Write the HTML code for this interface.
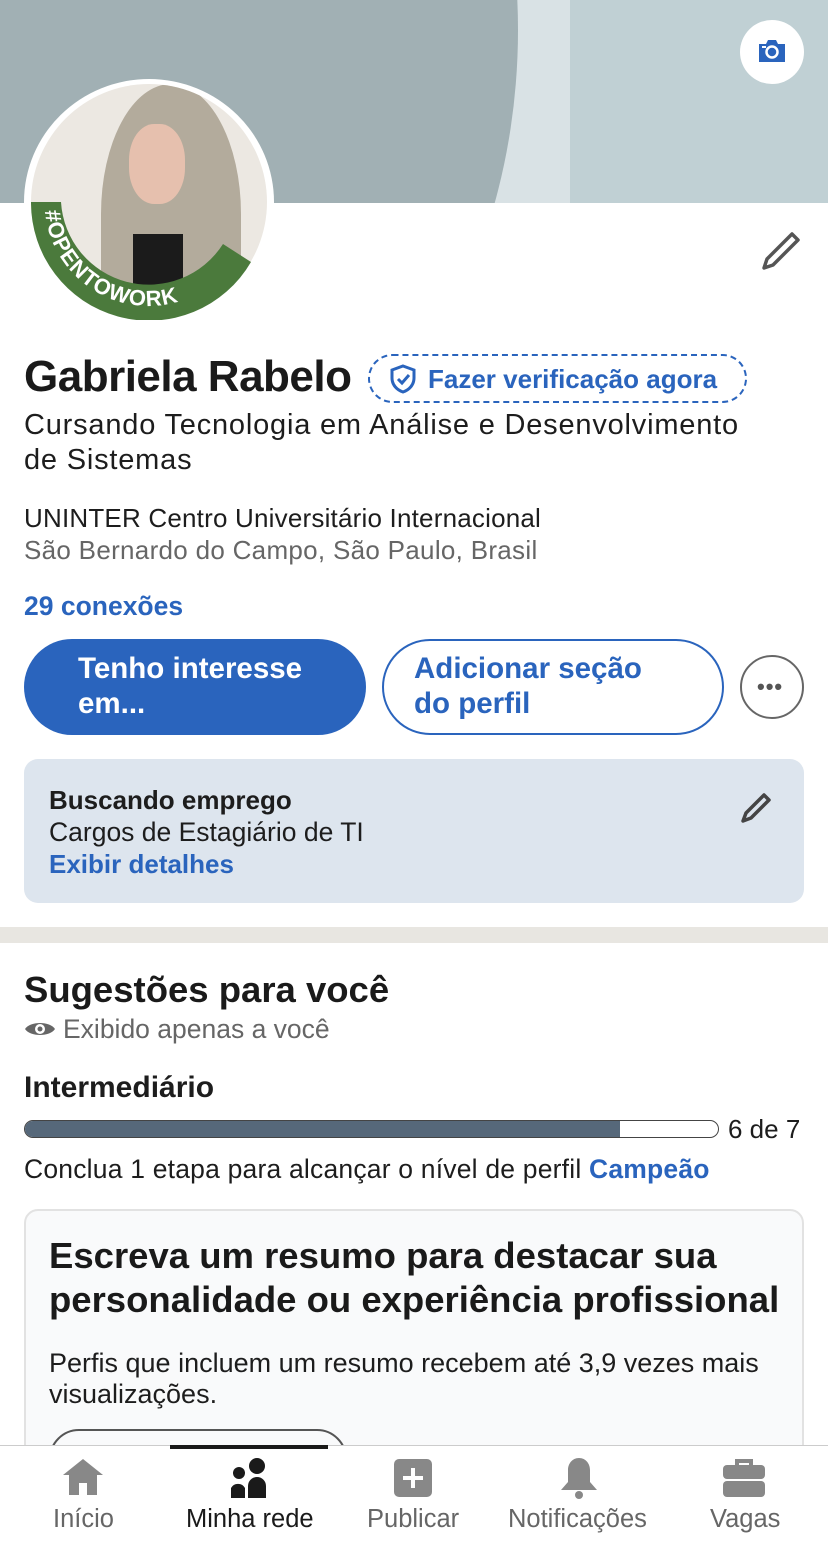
<!DOCTYPE html>
<html><head><meta charset="utf-8"><style>
*{margin:0;padding:0;box-sizing:border-box}
body{width:828px;height:1541px;overflow:hidden;background:#fff;font-family:"Liberation Sans",Arial,sans-serif;position:relative;color:#1d1d1d}
.a{position:absolute;white-space:nowrap}
.blue{color:#2a64bd}
</style></head><body>
<!-- banner -->
<div class="a" style="left:0;top:0;width:828px;height:203px;background:#c0d0d4"></div>
<div class="a" style="left:0;top:0;width:570px;height:203px;background:#d9e2e5"></div>
<div class="a" style="left:-400px;top:-520px;width:918px;height:1100px;border-radius:50%;background:#a1b0b4;clip-path:inset(520px 0 377px 0)"></div>
<div class="a" style="left:740px;top:20px;width:64px;height:64px;border-radius:50%;background:#fff"></div>
<svg class="a" style="left:757px;top:39px" width="30" height="24" viewBox="0 0 30 24"><path d="M2 5h7l2-4h8l2 4h7v18H2z" fill="#2a64bd"/><circle cx="15" cy="13" r="5.5" fill="none" stroke="#fff" stroke-width="2.5"/><rect x="5" y="7" width="4" height="2" fill="#fff"/></svg>
<!-- avatar -->
<div class="a" style="left:24px;top:79px;width:250px;height:246px;border-radius:50%;background:#fff"></div>
<div class="a" style="left:31px;top:84px;width:236px;height:236px;border-radius:50%;overflow:hidden;background:#ece8e2">
  <div class="a" style="left:70px;top:0;width:140px;height:260px;background:#b3ab9c;border-radius:50% 50% 20px 20px"></div>
  <div class="a" style="left:98px;top:40px;width:56px;height:80px;background:#e6c0ae;border-radius:45%"></div>
  <div class="a" style="left:102px;top:150px;width:50px;height:90px;background:#1b1b1b"></div>
</div>
<svg class="a" style="left:31px;top:84px" width="236" height="236" viewBox="0 0 236 236">
  <path d="M0 118 A118 118 0 0 0 220 178 L192 160 A88 88 0 0 1 30 118 Z" fill="#4b7a3c"/>
  <defs><path id="arc" d="M14 127 A104 104 0 0 0 162 212"/></defs>
  <text font-family="Liberation Sans" font-weight="bold" font-size="22" fill="#fff" letter-spacing="1"><textPath href="#arc">#OPENTOWORK</textPath></text>
</svg>
<svg class="a" style="left:760px;top:230px" width="42" height="42" viewBox="0 0 42 42"><path d="M32 4l6 6L13 35 4 38l3-9z" fill="none" stroke="#555" stroke-width="3.5" stroke-linejoin="round"/></svg>
<!-- name -->
<div class="a" style="left:24px;top:352px;font-size:44px;font-weight:bold;color:#1a1a1a;letter-spacing:-0.5px">Gabriela Rabelo</div>
<div class="a" style="left:368px;top:354px;width:379px;height:49px;border:2px dashed #2a64bd;border-radius:25px"></div>
<svg class="a" style="left:389px;top:364px" width="28" height="30" viewBox="0 0 28 30"><path d="M14 2l11 4v8c0 7-5 12-11 14C8 26 3 21 3 14V6z" fill="none" stroke="#2a64bd" stroke-width="3"/><path d="M9 15l4 4 7-8" fill="none" stroke="#2a64bd" stroke-width="3"/></svg>
<div class="a blue" style="left:428px;top:364px;font-size:26px;font-weight:bold">Fazer verificação agora</div>
<div class="a" style="left:24px;top:408px;font-size:29px;line-height:35px;letter-spacing:0.8px">Cursando Tecnologia em Análise e Desenvolvimento<br>de Sistemas</div>
<div class="a" style="left:24px;top:503px;font-size:26px;letter-spacing:0.2px">UNINTER Centro Universitário Internacional</div>
<div class="a" style="left:24px;top:535px;font-size:26px;letter-spacing:0.3px;color:#666">São Bernardo do Campo, São Paulo, Brasil</div>
<div class="a blue" style="left:24px;top:591px;font-size:26.5px;font-weight:bold">29 conexões</div>
<!-- buttons -->
<div class="a" style="left:24px;top:639px;width:342px;height:96px;border-radius:48px;background:#2a64bd"></div>
<div class="a" style="left:78px;top:651px;font-size:29.5px;line-height:35px;color:#fff;font-weight:bold">Tenho interesse<br>em...</div>
<div class="a" style="left:382px;top:639px;width:342px;height:96px;border-radius:48px;border:2px solid #2a64bd"></div>
<div class="a blue" style="left:414px;top:651px;font-size:29.5px;line-height:35px;font-weight:bold">Adicionar seção<br>do perfil</div>
<div class="a" style="left:740px;top:655px;width:64px;height:64px;border-radius:50%;border:2px solid #666"></div>
<div class="a" style="left:757px;top:674px;font-size:22px;font-weight:bold;color:#555;letter-spacing:1px">•••</div>
<!-- open to work card -->
<div class="a" style="left:24px;top:759px;width:780px;height:144px;border-radius:14px;background:#dde5ee"></div>
<div class="a" style="left:49px;top:785px;font-size:26px;font-weight:bold">Buscando emprego</div>
<div class="a" style="left:49px;top:817px;font-size:26.5px">Cargos de Estagiário de TI</div>
<div class="a blue" style="left:49px;top:849px;font-size:26px;font-weight:bold">Exibir detalhes</div>
<svg class="a" style="left:740px;top:792px" width="32" height="32" viewBox="0 0 32 32"><path d="M24 3l5 5L11 26 3 29l3-8z" fill="none" stroke="#444" stroke-width="3.5" stroke-linejoin="round"/></svg>
<div class="a" style="left:0;top:927px;width:828px;height:16px;background:#e8e6e1"></div>
<!-- suggestions -->
<div class="a" style="left:24px;top:969px;font-size:36.5px;font-weight:bold;color:#1a1a1a">Sugestões para você</div>
<svg class="a" style="left:24px;top:1018px" width="32" height="22" viewBox="0 0 32 22"><path d="M1 11C6 3 26 3 31 11C26 19 6 19 1 11z" fill="#666"/><circle cx="16" cy="11" r="5" fill="#fff"/><circle cx="16" cy="11" r="2.5" fill="#666"/></svg>
<div class="a" style="left:63px;top:1014px;font-size:26.5px;color:#666">Exibido apenas a você</div>
<div class="a" style="left:24px;top:1071px;font-size:30px;font-weight:bold">Intermediário</div>
<div class="a" style="left:24px;top:1120px;width:695px;height:18px;border-radius:9px;border:1.5px solid #444;overflow:hidden"><div style="width:595px;height:100%;background:#56687a"></div></div>
<div class="a" style="left:728px;top:1114px;font-size:26px">6 de 7</div>
<div class="a" style="left:24px;top:1154px;font-size:26.5px;letter-spacing:0.2px">Conclua 1 etapa para alcançar o nível de perfil <b class="blue">Campeão</b></div>
<div class="a" style="left:24px;top:1209px;width:780px;height:300px;border-radius:14px;border:2px solid #e2e2e2;background:#f9fafb"></div>
<div class="a" style="left:49px;top:1234px;font-size:36.5px;line-height:44px;font-weight:bold;color:#1a1a1a">Escreva um resumo para destacar sua<br>personalidade ou experiência profissional</div>
<div class="a" style="left:49px;top:1348px;font-size:27px;line-height:31px">Perfis que incluem um resumo recebem até 3,9 vezes mais<br>visualizações.</div>
<div class="a" style="left:49px;top:1429px;width:298px;height:60px;border-radius:30px;border:2px solid #555"></div>
<!-- tab bar -->
<div class="a" style="left:0;top:1445px;width:828px;height:96px;background:#fff;border-top:1.5px solid #ccc"></div>
<div class="a" style="left:170px;top:1445px;width:158px;height:4px;background:#1a1a1a"></div>
<svg class="a" style="left:61px;top:1457px" width="44" height="40" viewBox="0 0 44 40"><path d="M22 2L2 18h6v20h10V26h8v12h10V18h6z" fill="#888"/></svg>
<svg class="a" style="left:229px;top:1456px" width="40" height="42" viewBox="0 0 40 42"><circle cx="28" cy="10" r="8" fill="#1a1a1a"/><circle cx="10" cy="17" r="6" fill="#1a1a1a"/><path d="M19 42V30a9 9 0 0 1 18 0v12zM2 42V32a8 8 0 0 1 14 0v10z" fill="#1a1a1a"/></svg>
<svg class="a" style="left:394px;top:1459px" width="38" height="38" viewBox="0 0 38 38"><rect width="38" height="38" rx="5" fill="#888"/><path d="M19 9v20M9 19h20" stroke="#fff" stroke-width="4"/></svg>
<svg class="a" style="left:559px;top:1456px" width="40" height="44" viewBox="0 0 40 44"><path d="M20 2c-7 0-11 6-11 12v12l-7 8h36l-7-8V14c0-6-4-12-11-12z" fill="#888"/><circle cx="20" cy="39" r="4" fill="#888"/></svg>
<svg class="a" style="left:722px;top:1457px" width="44" height="40" viewBox="0 0 44 40"><path d="M15 8V4h14v4" fill="none" stroke="#888" stroke-width="4"/><rect x="1" y="8" width="42" height="14" rx="4" fill="#888"/><rect x="1" y="24" width="42" height="16" rx="4" fill="#888"/></svg>
<div class="a" style="left:53px;top:1505px;font-size:25.5px;color:#666">Início</div>
<div class="a" style="left:186px;top:1505px;font-size:25.5px;color:#1a1a1a">Minha rede</div>
<div class="a" style="left:367px;top:1505px;font-size:25.5px;color:#666">Publicar</div>
<div class="a" style="left:508px;top:1505px;font-size:25.5px;color:#666">Notificações</div>
<div class="a" style="left:710px;top:1505px;font-size:25.5px;color:#666">Vagas</div>
</body></html>
